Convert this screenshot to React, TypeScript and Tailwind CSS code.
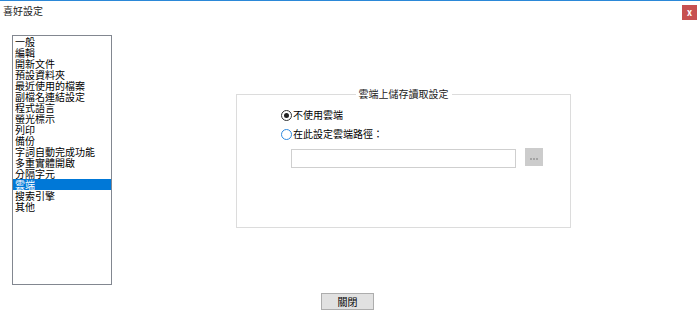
import { useState } from 'react';

const items = [
  '一般',
  '編輯',
  '開新文件',
  '預設資料夾',
  '最近使用的檔案',
  '副檔名連結設定',
  '程式語言',
  '螢光標示',
  '列印',
  '備份',
  '字詞自動完成功能',
  '多重實體開啟',
  '分隔字元',
  '雲端',
  '搜索引擎',
  '其他',
];

const font = { fontFamily: '"Noto Sans CJK TC", "Noto Sans CJK SC", sans-serif' };

const App = () => {
  const [selected, setSelected] = useState('雲端');
  const [useCloud, setUseCloud] = useState(false);

  return (
    <div className="relative flex h-[320px] w-[700px] flex-col bg-white text-[10px] text-black" style={font}>
      <div className="h-px w-full bg-[#2b88d8]" />
      <header className="flex h-[19px] items-center justify-between pl-[3px] pr-[3px]">
        <span className="leading-[12px] text-[#222]">喜好設定</span>
        <button
          type="button"
          className="mt-[3px] flex h-[15px] w-[15px] items-center justify-center bg-[#c75050] text-[9px] font-bold leading-none text-white"
          aria-label="close"
        >
          x
        </button>
      </header>

      <div className="mt-[15px] flex">
        <ul className="ml-[12px] h-[250px] w-[100px] border border-[#828790]">
          {items.map((item) => (
            <li
              key={item}
              onClick={() => setSelected(item)}
              className={
                item === selected
                  ? 'h-[11px] cursor-default bg-[#0078d7] pl-[2px] leading-[11px] text-white'
                  : 'h-[11px] cursor-default pl-[2px] leading-[11px] text-black'
              }
            >
              {item}
            </li>
          ))}
        </ul>

        <div className="ml-[124px] mt-[59px]">
          <div className="relative h-[134px] w-[335px] border border-[#dcdcdc]">
            <span className="absolute -top-[7px] left-1/2 -translate-x-1/2 bg-white px-[3px] leading-[12px] text-[#222]">
              雲端上儲存讀取設定
            </span>
            <div className="flex flex-col pl-[44px] pt-[13px]">
              <label className="flex h-[14px] items-center gap-[1px]" onClick={() => setUseCloud(false)}>
                <span className="flex h-[11px] w-[11px] items-center justify-center rounded-full border border-[#333]">
                  {!useCloud && <span className="h-[5px] w-[5px] rounded-full bg-[#222]" />}
                </span>
                <span className="leading-[12px]">不使用雲端</span>
              </label>
              <label className="mt-[5px] flex h-[14px] items-center gap-[1px]" onClick={() => setUseCloud(true)}>
                <span className="flex h-[11px] w-[11px] items-center justify-center rounded-full border border-[#2f8ae0]">
                  {useCloud && <span className="h-[5px] w-[5px] rounded-full bg-[#222]" />}
                </span>
                <span className="leading-[12px]">在此設定雲端路徑：</span>
              </label>
              <div className="ml-[10px] mt-[8px] flex items-start gap-[9px]">
                <input
                  type="text"
                  className="h-[19px] w-[225px] border border-[#cfcfcf] bg-white outline-none"
                />
                <button
                  type="button"
                  className="-mt-px flex h-[18px] w-[18px] items-end justify-center gap-[1px] bg-[#cccccc] pb-[6px]"
                  aria-label="browse"
                >
                  <span className="h-[2px] w-[2px] bg-[#a3a3a3]" />
                  <span className="h-[2px] w-[2px] bg-[#a3a3a3]" />
                  <span className="h-[2px] w-[2px] bg-[#a3a3a3]" />
                </button>
              </div>
            </div>
          </div>
        </div>
      </div>

      <div className="mt-[8px] pl-[321px]">
        <button
          type="button"
          className="h-[17px] w-[53px] border border-[#adadad] bg-[#e1e1e1] leading-[15px] text-black"
        >
          關閉
        </button>
      </div>
    </div>
  );
};

export default App;
